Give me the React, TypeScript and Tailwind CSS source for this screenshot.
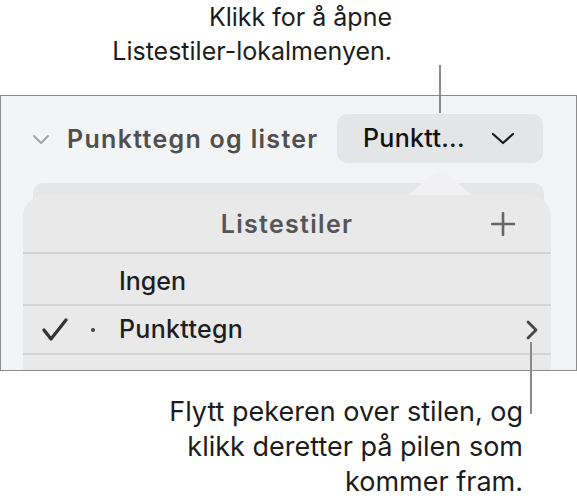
export default function App() {
  return (
    <div className="relative w-[577px] h-[502px] bg-white overflow-hidden font-['Inter','Liberation_Sans',sans-serif]">
      {/* top caption */}
      <div className="h-[95px] pr-[185px] text-right text-[25px] leading-[34px] text-[#1c1c1c]">
        <div>Klikk for å åpne</div>
        <div>Listestiler-lokalmenyen.</div>
      </div>

      {/* panel */}
      <div className="relative h-[276px] border-[1.5px] border-[#8c8c8c] bg-[#f3f4f6] overflow-hidden">
        <div className="flex items-center pt-[18px] pl-[31px] pr-[33px]">
          <svg width="18" height="11" viewBox="0 0 18 11" className="shrink-0 mt-[2px]">
            <polyline points="2,2 9,9 16,2" fill="none" stroke="#a3a3a3" strokeWidth="2" strokeLinecap="round" strokeLinejoin="round" />
          </svg>
          <div className="ml-[17px] mt-[3px] text-[25px] font-semibold text-[#4f4f4f] tracking-[1.3px]">Punkttegn og lister</div>
          <div className="ml-auto w-[206px] h-[49px] shrink-0 rounded-[10px] bg-[#e4e5e7] flex items-center pl-[26px] pr-[28px]">
            <span className="text-[25px] font-medium text-[#111] tracking-[0.3px]">Punktt...</span>
            <svg width="24" height="13" viewBox="0 0 24 13" className="ml-auto">
              <polyline points="2,2 12,11 22,2" fill="none" stroke="#1a1a1a" strokeWidth="2.2" strokeLinecap="round" strokeLinejoin="round" />
            </svg>
          </div>
        </div>

        {/* back card */}
        <div className="mt-[20px] ml-[32px] mr-[32px] h-[40px] rounded-[10px] bg-[#e5e6e8]" />

        {/* popover */}
        <div className="relative -mt-[28px] ml-[22px] mr-[25px] rounded-t-[22px] bg-[#e9e9e9] h-[200px]">
          <div className="grid grid-cols-[1fr_auto_1fr] items-center h-[57px]">
            <div />
            <div className="text-[25px] font-semibold text-[#555] tracking-[1.3px] pt-[2px]">Listestiler</div>
            <div className="justify-self-end pr-[36px] flex items-center">
              <svg width="24" height="24" viewBox="0 0 24 24">
                <line x1="12" y1="1" x2="12" y2="23" stroke="#666" strokeWidth="2.6" strokeLinecap="round" />
                <line x1="1" y1="12" x2="23" y2="12" stroke="#666" strokeWidth="2.6" strokeLinecap="round" />
              </svg>
            </div>
          </div>
          <div className="h-[2px] bg-[#d3d3d3]" />
          <div className="h-[50px] flex items-center pt-[6px] pl-[96px] text-[25px] font-medium text-[#1e1e1e]">Ingen</div>
          <div className="h-[2px] bg-[#d3d3d3]" />
          <div className="h-[47px] flex items-center pl-[19px] pr-[12px]">
            <svg width="26" height="24" viewBox="0 0 26 24" className="shrink-0">
              <polyline points="2,12 9,21 24,2" fill="none" stroke="#333" strokeWidth="3.2" strokeLinecap="round" strokeLinejoin="round" />
            </svg>
            <div className="ml-[23px] w-[4px] h-[4px] rounded-full bg-[#444] shrink-0" />
            <div className="ml-[24px] text-[25px] font-medium text-[#1e1e1e] tracking-[0.3px]">Punkttegn</div>
            <svg width="14" height="20" viewBox="0 0 14 20" className="ml-auto">
              <polyline points="3,2 11,10 3,18" fill="none" stroke="#444" strokeWidth="2.8" strokeLinecap="round" strokeLinejoin="round" />
            </svg>
          </div>
          <div className="h-[2px] bg-[#d3d3d3]" />
        </div>

        {/* popover arrow */}
        <svg width="64" height="26" viewBox="0 0 64 26" className="absolute left-[407px] top-[75px]">
          <path d="M0,24 L24,4 Q32,-2 40,4 L64,24 Z" fill="#f1f1f3" />
        </svg>
      </div>

      {/* bottom caption */}
      <div className="mt-[23px] pr-[54px] text-right text-[27px] leading-[35px] text-[#1c1c1c]">
        <div>Flytt pekeren over stilen, og</div>
        <div>klikk deretter på pilen som</div>
        <div>kommer fram.</div>
      </div>

      {/* callout lines */}
      <div className="absolute left-[439px] top-[65px] w-[2px] h-[48px] bg-[#8a8a8a]" />
      <div className="absolute left-[530px] top-[342px] w-[2px] h-[72px] bg-[#8a8a8a]" />
    </div>
  );
}
